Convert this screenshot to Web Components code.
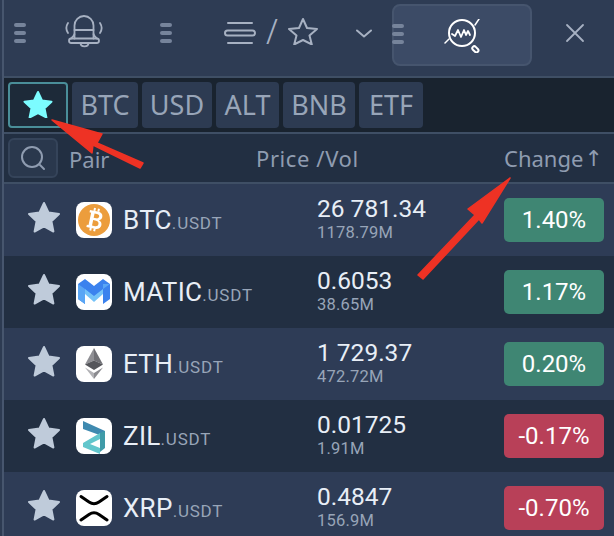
<!DOCTYPE html>
<html>
<head>
<meta charset="utf-8">
<style>
  html, body { margin: 0; padding: 0; background: #2d3b52; }
</style>
</head>
<body>
<ticker-app></ticker-app>

<template id="grip-tpl">
  <style>
    :host { display: flex; flex-direction: column; gap: 4px; width: 12px; }
    i { display: block; height: 4px; border-radius: 2px; background: #76849b; }
  </style>
  <i></i><i></i><i></i>
</template>

<template id="topbar-tpl">
  <style>
    :host { display: flex; align-items: flex-start; height: 76px; box-sizing: border-box; background: #2e3c54; color: #a7b1c2; }
    section { display: flex; align-items: center; height: 62px; margin-top: 4px; padding-bottom: 4px; box-sizing: border-box; }
    svg { display: block; fill: none; stroke: currentColor; stroke-linecap: round; stroke-linejoin: round; }
    .bell { width: 160px; padding-left: 14px; }
    .bell svg { margin-left: 39px; margin-top: -2px; }
    .layout { width: 232px; }
    .layout svg.lines { margin-left: 52px; }
    .slash { font: 300 34px "Noto Sans", sans-serif; width: 24px; margin-left: 4px; margin-top: -4px; text-align: center; }
    .layout svg.star { margin-left: 4px; margin-top: -4px; }
    .layout svg.chev { margin-left: 38px; margin-top: 2px; }
    .active { width: 140px; border: 2px solid #46556e; border-radius: 8px; background: #3c4b66; color: #fff; padding-bottom: 2px; }
    .active svg { margin-left: 40px; margin-top: 4px; }
    .active x-grip { margin-left: -2px; }
    .close { margin-left: 33px; }
  </style>
  <section class="bell">
    <x-grip></x-grip>
    <svg width="38" height="34" viewBox="0 0 38 34" stroke-width="1.800">
      <path d="M9.500 23.500V10.500a9.500 9.500 0 0 1 19 0V23.500"/>
      <path d="M9.500 15h19"/>
      <path d="M9.500 19c-.5 2-2 3-3.500 4.500M28.500 19c.5 2 2 3 3.500 4.500"/>
      <rect x="4" y="23.500" width="30" height="4.500" rx="2.250"/>
      <path d="M15.500 28c0 4.500 8 4.500 8 0"/>
      <path d="M3 8c-2 3-2 7 0 10M35 8c2 3 2 7 0 10"/>
    </svg>
  </section>
  <section class="layout">
    <x-grip></x-grip>
    <svg class="lines" width="32" height="24" viewBox="0 0 32 24" stroke-width="2">
      <path d="M4 2h24M4 22h24"/><rect x="1" y="9.500" width="30" height="5" rx="2.500"/>
    </svg>
    <span class="slash">/</span>
    <svg class="star" width="30" height="28" viewBox="0 0 30 28" stroke-width="2">
      <path d="M15 2l4 9 10 1-7.500 6.500 2.300 9L15 23l-8.800 4.500 2.300-9L1 12l10-1z"/>
    </svg>
    <svg class="chev" width="16" height="10" viewBox="0 0 16 10" stroke-width="2"><path d="M1 1.500l7 6 7-6"/></svg>
  </section>
  <section class="active">
    <x-grip></x-grip>
    <svg width="38" height="34" viewBox="0 0 38 34" stroke-width="2">
      <circle cx="18" cy="14" r="13"/>
      <path d="M8 15l3 2 3-6 3 7 3-7 2 5 2-4 2 4" stroke-width="1.800"/>
      <path d="M1 24l4-4M31 6l4-6" stroke-width="1.500"/>
      <rect x="-3" y="-2" width="7" height="4" rx="2" transform="translate(31 30) rotate(45)"/>
    </svg>
  </section>
  <section class="close">
    <svg width="20" height="20" viewBox="0 0 20 20" stroke-width="1.800"><path d="M2 2l16 16M18 2L2 18"/></svg>
  </section>
</template>

<template id="tabs-tpl">
  <style>
    :host { display: flex; gap: 4px; height: 54px; box-sizing: border-box; padding: 4px 0 4px 4px; background: #19232f; }
  </style>
  <slot></slot>
</template>

<template id="tab-tpl">
  <style>
    :host { display: flex; align-items: center; justify-content: center; box-sizing: border-box; height: 46px; padding-bottom: 2px; background: #2d3b52; border-radius: 4px; color: #98a5b8; font: 400 27px "Noto Sans", sans-serif; }
    :host([selected]) { background: #1d2a39; border: 2px solid #4a8e99; color: #7cfcff; }
  </style>
  <slot></slot>
</template>

<template id="head-tpl">
  <style>
    :host { display: flex; align-items: center; height: 48px; box-sizing: border-box; padding-left: 4px; background: #222f42; color: #8f9cb0; font: 400 22px "Noto Sans", sans-serif; }
    button { all: unset; display: flex; align-items: center; justify-content: center; box-sizing: border-box; width: 50px; height: 40px; border: 2px solid #35445a; border-radius: 6px; background: #2a384d; color: #8f9cb0; }
    .pair { margin-left: 11px; width: 187px; padding-top: 2px; }
    .price { width: 248px; letter-spacing: .6px; }
    .up { font: 22px "DejaVu Sans", sans-serif; margin-left: 1px; }
  </style>
  <button aria-label="Search">
    <svg width="26" height="26" viewBox="0 0 26 26" fill="none" stroke="currentColor" stroke-width="2"><circle cx="12" cy="12" r="10"/><path d="M20 20l4 4" stroke-linecap="round"/></svg>
  </button>
  <span class="pair">Pair</span>
  <span class="price">Price /Vol</span>
  <span>Change</span><span class="up">↑</span>
</template>

<template id="row-tpl">
  <style>
    :host { display: flex; align-items: center; height: 72px; box-sizing: border-box; padding-left: 23px; background: #2e3c56; color: #e8eef6; font-family: Roboto, sans-serif; flex: none; }
    :host([dark]) { background: #222f42; }
    .star { width: 34px; height: 32px; margin-right: 15px; margin-top: -6px; fill: #bfcbda; }
    .logo { width: 36px; height: 36px; border-radius: 8px; background: #fff; overflow: hidden; margin-right: 11px; }
    .name { width: 194px; font-size: 26px; line-height: 30px; margin-top: 2px; letter-spacing: .3px; }
    .name small { font-size: 17px; color: #98a5b8; letter-spacing: .8px; }
    .quote { width: 187px; margin-bottom: 3px; }
    .last { font-size: 24.500px; line-height: 28px; }
    .vol { font-size: 16.500px; line-height: 20px; color: #98a5b8; letter-spacing: .2px; }
    .chg { width: 100px; height: 44px; border-radius: 5px; display: flex; align-items: center; justify-content: center; color: #fff; font-size: 24px; background: #3f8673; }
    :host([down]) .chg { background: #b84058; }
  </style>
  <svg class="star" viewBox="0 0 34 32"><path stroke="#bfcbda" stroke-width="2" stroke-linejoin="round" d="M17 2l4.600 9.600 10.400 1.400-7.600 7.200 2 10.300L17 25.400 7.600 30.500l2-10.300L2 13l10.400-1.400z"/></svg>
  <div class="logo"><slot name="logo"></slot></div>
  <div class="name"><span id="base"></span><small id="pair">.USDT</small></div>
  <div class="quote"><div class="last" id="last"></div><div class="vol" id="vol"></div></div>
  <div class="chg" id="chg"></div>
</template>

<template id="app-tpl">
  <style>
    :host { display: block; position: relative; width: 614px; height: 536px; overflow: hidden; box-sizing: border-box; padding-left: 4px; background: #2d3b52; }
    :host::before { content: ""; position: absolute; left: 2px; top: 0; bottom: 0; width: 2px; background: #47566e; z-index: 1; }
    hr { margin: 0; border: 0; height: 2px; background: #3f4f65; }
    svg.marks { position: absolute; left: 0; top: 0; z-index: 2; }
    x-topbar { margin-left: -4px; }
    svg.logo { display: block; width: 36px; height: 36px; }
  </style>
  <x-topbar></x-topbar>
  <hr>
  <x-tabs>
    <x-tab selected style="width:60px">
      <svg width="30" height="28" viewBox="0 0 30 28"><path fill="#7cfcff" stroke="#7cfcff" stroke-width="2" stroke-linejoin="round" d="M15 2l4 8.500 9.500 1.200-7 6.500 1.900 9.300L15 23l-8.400 4.500 1.900-9.300-7-6.500L11 10.500z"/></svg>
    </x-tab>
    <x-tab style="width:66px">BTC</x-tab>
    <x-tab style="width:70px">USD</x-tab>
    <x-tab style="width:63px">ALT</x-tab>
    <x-tab style="width:72px">BNB</x-tab>
    <x-tab style="width:64px">ETF</x-tab>
  </x-tabs>
  <hr>
  <x-head></x-head>
  <hr>
  <x-row base="BTC" last="26 781.34" vol="1178.79M" chg="1.40%">
    <svg slot="logo" class="logo" viewBox="0 0 36 36">
      <circle cx="18" cy="18" r="16" fill="#ec9d3c"/>
      <g transform="rotate(12 18 18)" fill="#fff">
        <path fill-rule="evenodd" d="M12 9h8c3.500 0 5.500 1.700 5.500 4.300 0 1.800-1 3.200-2.600 3.900 2.100.600 3.400 2.200 3.400 4.300 0 3-2.300 5-6 5h-8.300v-2.400h1.700V11.400H12zm5.200 2.400v4.500h2.500c1.700 0 2.700-.9 2.700-2.300s-1-2.200-2.700-2.200zm0 6.800v5.600h3c1.900 0 3-1 3-2.800s-1.100-2.800-3-2.800z"/>
        <path d="M15.500 6h2v3h-2zM19.500 6h2v3h-2zM15.500 26h2v3h-2zM19.500 26h2v3h-2z"/>
      </g>
    </svg>
  </x-row>
  <x-row dark base="MATIC" last="0.6053" vol="38.65M" chg="1.17%">
    <svg slot="logo" class="logo" viewBox="0 0 36 36">
      <path fill="#3b82ee" d="M2 10l7-5 9 7 9-7 7 5v15l-7 5V16l-9 7-9-7v14l-7-5z"/>
      <path fill="#74c2f8" d="M9 15l9 7 9-7v5l-9 8-9-8z"/>
      <path fill="#5aa6f5" d="M2 10l7 5v15l-7-5zM27 15l7-5-7 0z"/>
    </svg>
  </x-row>
  <x-row base="ETH" last="1 729.37" vol="472.72M" chg="0.20%">
    <svg slot="logo" class="logo" viewBox="0 0 36 36">
      <path fill="#8f8f94" d="M18 2L9 18.500l9-4z"/>
      <path fill="#707075" d="M18 2l9 16.500-9-4z"/>
      <path fill="#55565b" d="M9 18.500l9-4 9 4-9 5.500z"/>
      <path fill="#b1b1b5" d="M9 21.500l9 5.500v6z"/>
      <path fill="#8b8b90" d="M27 21.500L18 27v6z"/>
    </svg>
  </x-row>
  <x-row dark down base="ZIL" last="0.01725" vol="1.91M" chg="-0.17%">
    <svg slot="logo" class="logo" viewBox="0 0 36 36">
      <path fill="#3f8ab0" d="M7 3l22 10v6L7 11z"/>
      <path fill="#62c6cc" d="M24 15L7 25v4l17 7v-6l-10-4 10-5z"/>
      <path fill="#3f9ba8" d="M24 15l5-2v17l-5 4z"/>
    </svg>
  </x-row>
  <x-row down base="XRP" last="0.4847" vol="156.9M" chg="-0.70%">
    <svg slot="logo" class="logo" viewBox="0 0 36 36">
      <path fill="none" stroke="#000" stroke-width="3" stroke-linecap="round" d="M5 6.500L13 12Q18 15.500 23 12L31 6.500M5 30L13 24.500Q18 21 23 24.500L31 30"/>
    </svg>
  </x-row>
  <svg class="marks" width="614" height="536">
    <g fill="#ee3224" stroke="#ee3224" stroke-width="1.500" stroke-linejoin="round">
      <path d="M52 120L102 134 97 143 143 163 140 168 93 145 92 153z"/>
      <path d="M510 178L468 209 475 215 418 275 423 279 479 219 482 223z"/>
    </g>
  </svg>
</template>

<script>
  class Base extends HTMLElement {
    connectedCallback() {
      if (!this.shadowRoot) {
        this.attachShadow({mode: 'open'});
        const tpl = document.getElementById(this.constructor.templateId);
        this.shadowRoot.appendChild(tpl.content.cloneNode(true));
        this.render();
      }
    }
    render() {}
  }

  class XGrip extends Base { static get templateId() { return 'grip-tpl'; } }
  class XTopbar extends Base { static get templateId() { return 'topbar-tpl'; } }
  class XTabs extends Base { static get templateId() { return 'tabs-tpl'; } }
  class XTab extends Base { static get templateId() { return 'tab-tpl'; } }
  class XHead extends Base { static get templateId() { return 'head-tpl'; } }
  class TickerApp extends Base { static get templateId() { return 'app-tpl'; } }

  class XRow extends Base {
    static get templateId() { return 'row-tpl'; }
    render() {
      ['base', 'last', 'vol', 'chg'].forEach(attr => {
        this.shadowRoot.getElementById(attr).textContent = this.getAttribute(attr);
      });
    }
  }

  customElements.define('x-grip', XGrip);
  customElements.define('x-topbar', XTopbar);
  customElements.define('x-tabs', XTabs);
  customElements.define('x-tab', XTab);
  customElements.define('x-head', XHead);
  customElements.define('x-row', XRow);
  customElements.define('ticker-app', TickerApp);
</script>
</body>
</html>
